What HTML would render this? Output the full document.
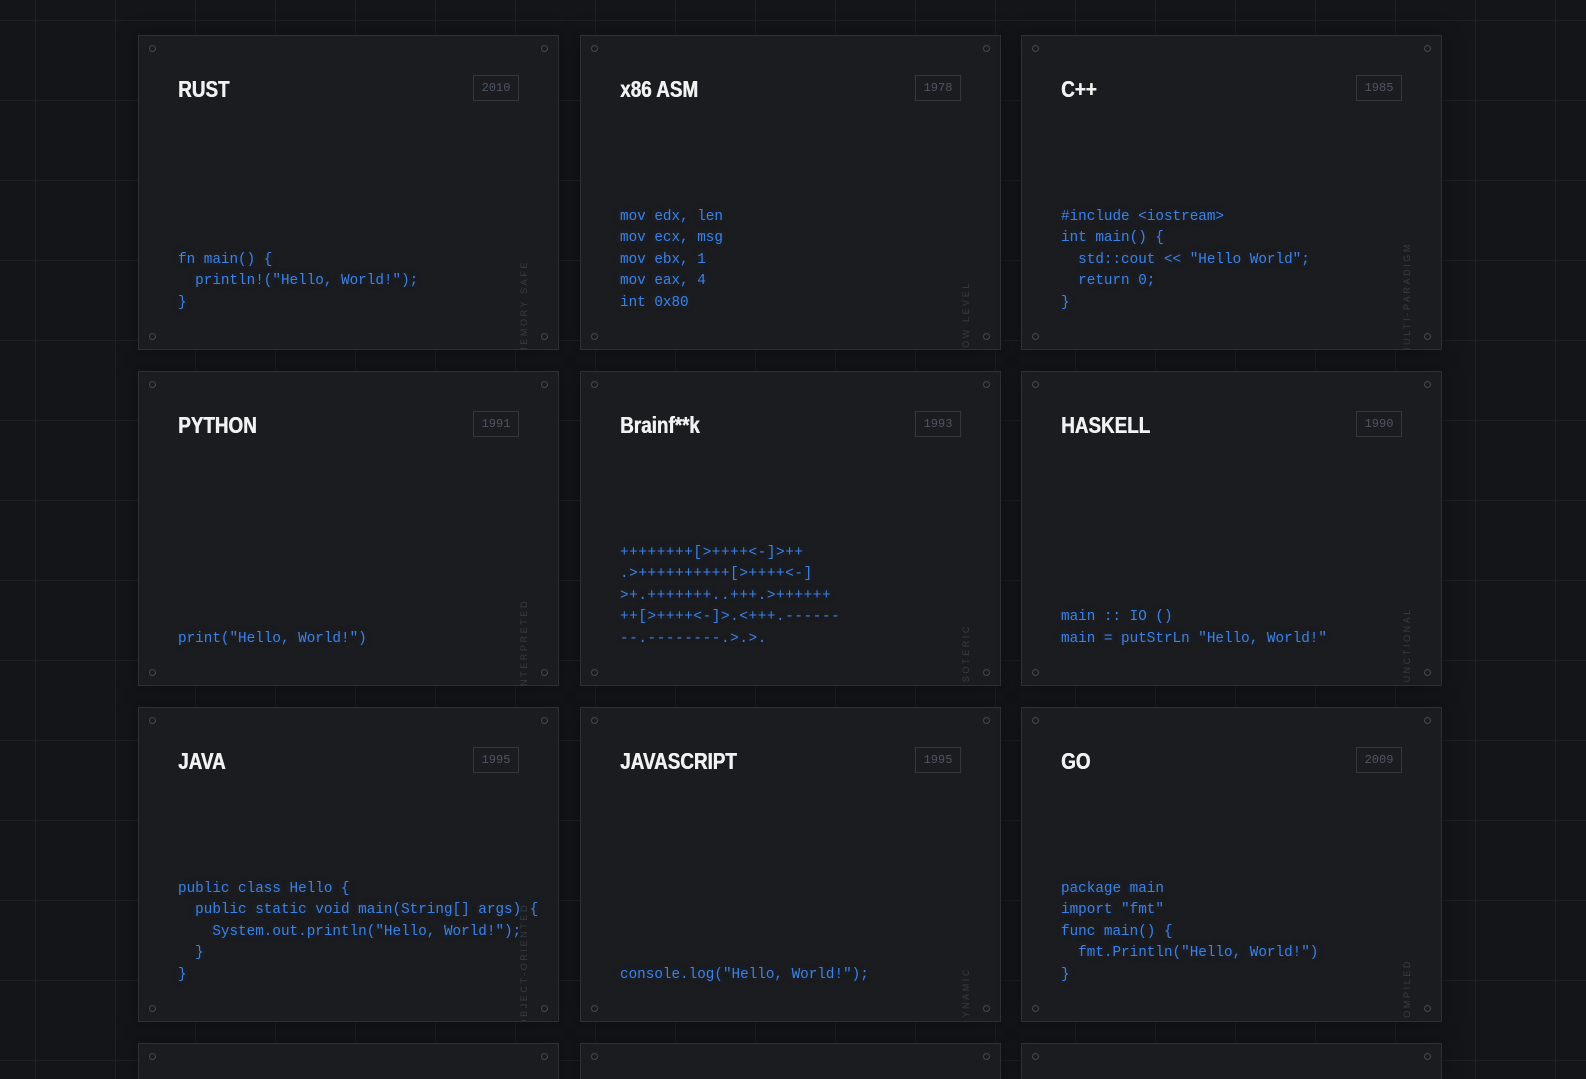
<!DOCTYPE html>
<html><head><meta charset="utf-8"><style>
*{margin:0;padding:0;box-sizing:border-box}
html,body{width:1586px;height:1079px;overflow:hidden}
body{background-color:#141518;background-image:linear-gradient(#1f2024 1px,transparent 1px),linear-gradient(90deg,#1f2024 1px,transparent 1px);background-size:80px 80px;background-position:35px 20px;font-family:"Liberation Mono",monospace;position:relative}
.card{position:absolute;width:421px;height:315px;background:#1b1c1f;border:1px solid #2e3035;overflow:hidden;box-shadow:0 0 20px rgba(0,0,0,.35)}
.short{height:36px;border-bottom:none}
.dot{position:absolute;width:7px;height:7px;border:1px solid #45484e;border-radius:50%}
.d1{left:10px;top:9px}.d2{right:10px;top:9px}.d3{left:10px;bottom:9px}.d4{right:10px;bottom:9px}
.t{position:absolute;left:39px;top:40px;color:#f2f2f2;font-family:"Liberation Sans",sans-serif;font-weight:bold;font-size:23px;transform:scaleX(.82);transform-origin:0 50%;white-space:nowrap;text-shadow:.6px 0 0 #f2f2f2}
.y{position:absolute;left:334px;top:39px;width:46px;height:26px;border:1px solid #34373c;color:#4f5663;font-size:12px;text-align:center;line-height:24px}
.c{position:absolute;left:39px;bottom:35px;color:#3d82e6;font-size:14.3px;line-height:21.5px;white-space:pre;text-shadow:0 0 8px rgba(40,100,200,.25)}
.l{position:absolute;right:29px;bottom:-6px;writing-mode:vertical-rl;transform:rotate(180deg);color:#383c44;font-family:"Liberation Sans",sans-serif;font-size:9px;letter-spacing:2.6px;white-space:nowrap}
</style></head><body>
<div class="card" style="left:138px;top:35px"><i class="dot d1"></i><i class="dot d2"></i><i class="dot d3"></i><i class="dot d4"></i><div class="t">RUST</div><div class="y">2010</div><div class="c">fn main() {
  println!("Hello, World!");
}</div><div class="l">MEMORY SAFE</div></div>
<div class="card" style="left:580px;top:35px"><i class="dot d1"></i><i class="dot d2"></i><i class="dot d3"></i><i class="dot d4"></i><div class="t">x86 ASM</div><div class="y">1978</div><div class="c">mov edx, len
mov ecx, msg
mov ebx, 1
mov eax, 4
int 0x80</div><div class="l">LOW LEVEL</div></div>
<div class="card" style="left:1021px;top:35px"><i class="dot d1"></i><i class="dot d2"></i><i class="dot d3"></i><i class="dot d4"></i><div class="t">C++</div><div class="y">1985</div><div class="c">#include &lt;iostream&gt;
int main() {
  std::cout &lt;&lt; "Hello World";
  return 0;
}</div><div class="l">MULTI-PARADIGM</div></div>

<div class="card" style="left:138px;top:371px"><i class="dot d1"></i><i class="dot d2"></i><i class="dot d3"></i><i class="dot d4"></i><div class="t">PYTHON</div><div class="y">1991</div><div class="c">print("Hello, World!")</div><div class="l">INTERPRETED</div></div>
<div class="card" style="left:580px;top:371px"><i class="dot d1"></i><i class="dot d2"></i><i class="dot d3"></i><i class="dot d4"></i><div class="t">Brainf**k</div><div class="y">1993</div><div class="c" style="letter-spacing:.6px">++++++++[&gt;++++&lt;-]&gt;++
.&gt;++++++++++[&gt;++++&lt;-]
&gt;+.+++++++..+++.&gt;++++++
++[&gt;++++&lt;-]&gt;.&lt;+++.------
--.--------.&gt;.&gt;.</div><div class="l">ESOTERIC</div></div>
<div class="card" style="left:1021px;top:371px"><i class="dot d1"></i><i class="dot d2"></i><i class="dot d3"></i><i class="dot d4"></i><div class="t">HASKELL</div><div class="y">1990</div><div class="c">main :: IO ()
main = putStrLn "Hello, World!"</div><div class="l">FUNCTIONAL</div></div>

<div class="card" style="left:138px;top:707px"><i class="dot d1"></i><i class="dot d2"></i><i class="dot d3"></i><i class="dot d4"></i><div class="t">JAVA</div><div class="y">1995</div><div class="c">public class Hello {
  public static void main(String[] args) {
    System.out.println("Hello, World!");
  }
}</div><div class="l">OBJECT-ORIENTED</div></div>
<div class="card" style="left:580px;top:707px"><i class="dot d1"></i><i class="dot d2"></i><i class="dot d3"></i><i class="dot d4"></i><div class="t">JAVASCRIPT</div><div class="y">1995</div><div class="c">console.log("Hello, World!");</div><div class="l">DYNAMIC</div></div>
<div class="card" style="left:1021px;top:707px"><i class="dot d1"></i><i class="dot d2"></i><i class="dot d3"></i><i class="dot d4"></i><div class="t">GO</div><div class="y">2009</div><div class="c">package main
import "fmt"
func main() {
  fmt.Println("Hello, World!")
}</div><div class="l">COMPILED</div></div>

<div class="card short" style="left:138px;top:1043px"><i class="dot d1"></i><i class="dot d2"></i></div>
<div class="card short" style="left:580px;top:1043px"><i class="dot d1"></i><i class="dot d2"></i></div>
<div class="card short" style="left:1021px;top:1043px"><i class="dot d1"></i><i class="dot d2"></i></div>
</body></html>
